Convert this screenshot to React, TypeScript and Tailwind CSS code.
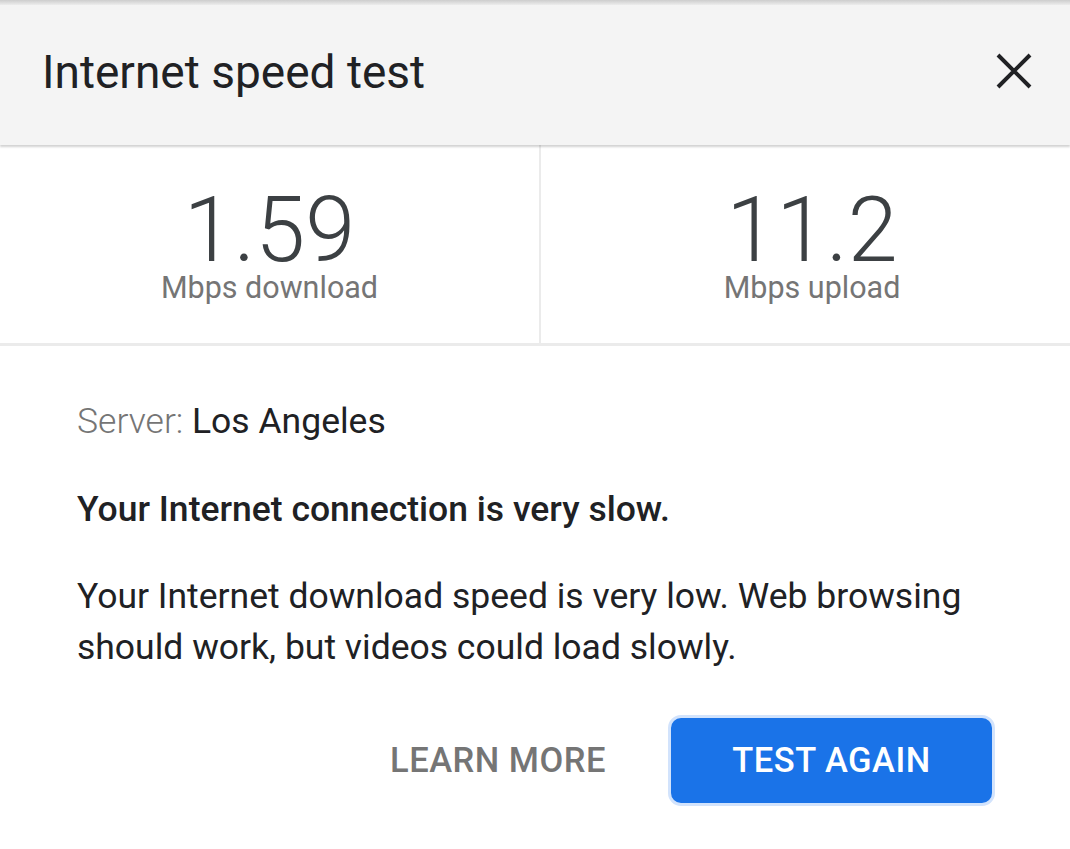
import { useState } from 'react'

const font = { fontFamily: 'Roboto, "Noto Sans", Arial, sans-serif' }

function Stat({ value, label }: { value: string; label: string }) {
  return (
    <div className="flex flex-col items-center pt-[55px]">
      <span className="text-[90px] font-light leading-[62px] text-[#3c4043]">{value}</span>
      <span className="mt-[8px] text-[30.5px] leading-[36px] text-[#757575]">{label}</span>
    </div>
  )
}

export default function App() {
  const [open, setOpen] = useState(true)

  return (
    <div style={font} className="w-[1070px] h-[849px] bg-white overflow-hidden">
      {/* top edge */}
      <div className="h-[5px] bg-gradient-to-b from-[#cdcdcd] to-[#ededed]" />

      {/* header */}
      <div className="relative z-10 h-[140px] bg-[#f4f4f4] flex items-center justify-between pl-[42px] pr-[38px] shadow-[0_2px_2px_rgba(0,0,0,0.18)]">
        <h1 className="text-[46px] leading-[69px] font-normal text-[#202124] pb-[5px]">Internet speed test</h1>
        <button onClick={() => setOpen(!open)} className="flex items-center justify-center mb-[9px]">
          <svg width="36" height="36" viewBox="0 0 36 36">
            <path d="M2 2 L34 34 M34 2 L2 34" stroke="#202124" strokeWidth="4" />
          </svg>
        </button>
      </div>

      {/* results */}
      <div className="grid grid-cols-[541px_1fr] h-[201px] border-b-[3px] border-[#ebebeb]">
        <div className="border-r-2 border-[#ebebeb]">
          <Stat value="1.59" label="Mbps download" />
        </div>
        <div className="pl-[13px]">
          <Stat value="11.2" label="Mbps upload" />
        </div>
      </div>

      <div className="px-[77px] pt-[55px]">
        <p className="text-[35.5px] leading-[40px]">
          <span className="font-light text-[#757575]">Server: </span>
          <span className="text-[#202124]">Los Angeles</span>
        </p>
        <p className="mt-[48px] text-[35.5px] leading-[40px] font-medium text-[#202124]">
          Your Internet connection is very slow.
        </p>
        <p className="mt-[42px] text-[35.5px] leading-[51px] text-[#202124]">
          Your Internet download speed is very low. Web browsing should work, but videos could load slowly.
        </p>

        <div className="mt-[42px] -mr-[2px] flex items-center justify-end gap-[62px]">
          <button className="text-[34.5px] font-medium tracking-[0.5px] text-[#757575]">LEARN MORE</button>
          <button className="w-[327px] h-[91px] rounded-[13px] bg-[#1a73e8] border-[3px] border-[#d2e3fc] text-[34.5px] font-medium tracking-[0.5px] text-white">
            TEST AGAIN
          </button>
        </div>
      </div>
    </div>
  )
}
